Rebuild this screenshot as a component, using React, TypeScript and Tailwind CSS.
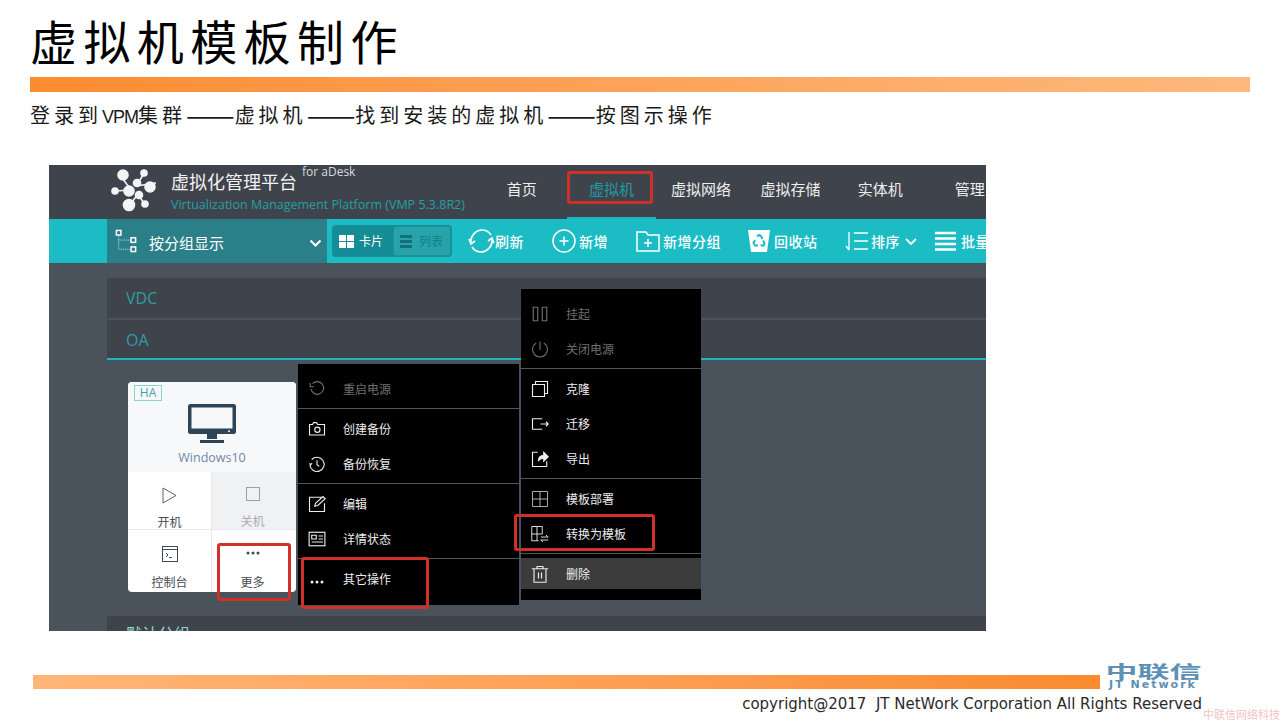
import React from "react";

const cjk = "font-['Noto_Sans_CJK_SC','Liberation_Sans',sans-serif]";

const Stroke: React.FC<{ size?: number; children: React.ReactNode; className?: string }> = ({
  size = 24,
  children,
  className,
}) => (
  <svg width={size} height={size} viewBox="0 0 24 24" fill="none" stroke="currentColor" strokeWidth="1.5" className={className}>
    {children}
  </svg>
);

const MenuItem: React.FC<{ icon: React.ReactNode; label: string; dim?: boolean; active?: boolean }> = ({
  icon,
  label,
  dim,
  active,
}) => (
  <div
    className={`flex items-center pl-[10px] ${active ? "h-[31px] mt-[4px] bg-[#3b3b3b]" : "h-[35px]"} ${
      dim ? "text-[#6f6f6f]" : "text-[#eeeeee]"
    }`}
  >
    <span className="w-[18px] h-[18px] flex items-center justify-center shrink-0">{icon}</span>
    <span className="ml-[17px] text-[12px]">{label}</span>
  </div>
);

const Sep = () => <div className="h-px my-[2px] bg-[#555555]" />;

const ToolItem: React.FC<{ icon: React.ReactNode; label: string; w: string; gap?: string; tail?: React.ReactNode }> = ({
  icon,
  label,
  w,
  gap = "ml-[3px]",
  tail,
}) => (
  <div className={`flex items-center text-white text-[14px] font-medium whitespace-nowrap shrink-0 ${w}`}>
    {icon}
    <span className={`${gap} tracking-[0.5px]`}>{label}</span>
    {tail}
  </div>
);

const Cell: React.FC<{ icon: React.ReactNode; label: string; dim?: boolean; className?: string; labelGap?: string }> = ({
  icon,
  label,
  dim,
  className,
  labelGap = "mt-[5px]",
}) => (
  <div className={`flex flex-col items-center ${className ?? ""}`}>
    <div className="h-[26px] shrink-0 flex items-center justify-center">{icon}</div>
    <span className={`${labelGap} shrink-0 text-[12px] leading-[20px] ${dim ? "text-[#a9adb3]" : "text-[#444a52]"}`}>{label}</span>
  </div>
);

const Logo = () => (
  <svg width="48" height="44" viewBox="0 0 48 44" fill="#f4f4f4" stroke="#f4f4f4" strokeWidth="1.6">
    <path d="M9 7 20 22 M34 4 25 18 M45 15 25 18 M4 23 20 22 M18 38 27 26 M34 37 27 26" />
    <circle cx="12" cy="7" r="5" />
    <circle cx="33" cy="5" r="3" />
    <circle cx="39" cy="19" r="5" />
    <circle cx="4" cy="23" r="3" />
    <circle cx="18" cy="23" r="5" />
    <circle cx="26" cy="15" r="3.5" />
    <circle cx="28" cy="27" r="3.5" />
    <circle cx="18" cy="37" r="5.5" />
    <circle cx="34" cy="36" r="3" />
  </svg>
);

const navItem = "w-[89.6px] flex justify-center pt-[13px]";
const dash = "text-[29px] leading-[0px] tracking-[0px] align-[-3px]";

export default function App() {
  return (
    <div className={`relative w-[1280px] h-[720px] overflow-hidden bg-white flex flex-col ${cjk}`}>
      <h1 className="ml-[30px] h-[77px] pt-[4px] text-[47px] leading-[72px] font-normal tracking-[6.4px] text-black whitespace-nowrap">
        虚拟机模板制作
      </h1>
      <div className="ml-[30px] w-[1220px] h-[15px] bg-gradient-to-r from-[#fb8c2e] to-[#fdb97c]" />
      <p className="ml-[30px] mt-[8px] h-[30px] text-[20px] leading-[30px] font-normal tracking-[4px] text-[#1a1a1a] whitespace-nowrap">
        登录到<span className="text-[18px] tracking-[-1px] font-['Liberation_Sans',sans-serif]">VPM</span>集群
        <span className={dash}>——</span>虚拟机<span className={dash}>——</span>找到安装的虚拟机<span className={dash}>——</span>按图示操作
      </p>

      <div className="relative ml-[49px] mt-[35px] w-[937px] h-[466px] overflow-hidden bg-[#4a535c]">
        {/* top nav */}
        <div className="h-[54px] bg-[#3f444c] flex pl-[62px]">
          <div className="mt-[3px]">
            <Logo />
          </div>
          <div className="ml-[12px] w-[306px] shrink-0 relative">
            <div className="flex items-start h-[30px]">
              <span className="text-[18px] leading-[26px] mt-[3px] text-[#f2f2f2] whitespace-nowrap">虚拟化管理平台</span>
              <span className="ml-[5px] text-[12px] leading-[14px] font-['Open_Sans',sans-serif] text-[#d8dadd] whitespace-nowrap">
                for aDesk
              </span>
            </div>
            <div className="text-[12.5px] leading-[16px] mt-[2px] font-['Open_Sans',sans-serif] text-[#22a0a6] whitespace-nowrap">
              Virtualization Management Platform (VMP 5.3.8R2)
            </div>
          </div>
          <nav className="flex h-[54px] text-[15px] text-[#eeeeee] whitespace-nowrap shrink-0">
            <a className={navItem}>首页</a>
            <a className={`${navItem} text-[#1f9aa2] border-b-2 border-[#1fb5bd]`}>虚拟机</a>
            <a className={navItem}>虚拟网络</a>
            <a className={navItem}>虚拟存储</a>
            <a className={navItem}>实体机</a>
            <a className={navItem}>管理</a>
          </nav>
        </div>

        {/* toolbar */}
        <div className="h-[44px] bg-[#1bbcc4] flex items-center pl-[58px]">
          <div className="w-[220px] h-[44px] bg-[#2a7f88] flex items-center pl-[8px] shrink-0 text-white">
            <svg width="22" height="26" viewBox="0 0 24 26" fill="none" stroke="#fff">
              <rect x="1.5" y="1.5" width="5" height="5" strokeWidth="1.6" />
              <rect x="17.5" y="9.5" width="5" height="5" strokeWidth="1.6" />
              <rect x="17.5" y="19.5" width="5" height="5" strokeWidth="1.6" />
              <path d="M4 7V22H17M4 12H17" strokeWidth="0.8" strokeDasharray="1 1" />
            </svg>
            <span className="ml-[12px] mt-[4px] text-[15px] whitespace-nowrap">按分组显示</span>
            <svg width="13" height="8" viewBox="0 0 12 8" fill="none" stroke="#fff" strokeWidth="2" className="ml-[85px] mt-[4px]">
              <path d="M1 1.5 6 6.5 11 1.5" />
            </svg>
          </div>
          <div className="ml-[5px] w-[120px] h-[32px] rounded-[4px] bg-[#158d96] flex shrink-0">
            <div className="w-[61px] flex items-center pl-[7px] text-white text-[12px]">
              <svg width="15" height="13" viewBox="0 0 15 13" fill="#fff">
                <path d="M0 0h7v6H0zM8 0h7v6H8zM0 7h7v6H0zM8 7h7v6H8z" />
              </svg>
              <span className="ml-[5px]">卡片</span>
            </div>
            <div className="w-[58px] my-px rounded-[3px] bg-[#27a3aa] border border-[#1e9099] flex items-center pl-[6px] text-[#158088] text-[12px]">
              <svg width="12" height="13" viewBox="0 0 12 13" fill="#126f77">
                <path d="M0 0h12v3H0zM0 5h12v3H0zM0 10h12v3H0z" />
              </svg>
              <span className="ml-[7px]">列表</span>
            </div>
          </div>
          <div className="ml-[16px] flex items-center">
            <ToolItem
              w="w-[84px]"
              gap="ml-0"
              label="刷新"
              icon={
                <svg width="27" height="26" viewBox="0 0 27 26" fill="none" stroke="#fff" strokeWidth="1.7">
                  <path d="M3 15C2 8 8 2 14 2c4 0 7 2 9 5M24 11c1 7-5 13-11 13-4 0-7-2-9-5" />
                  <path d="M1 11 3 16 7 13M26 15 24 10 20 13" />
                </svg>
              }
            />
            <ToolItem
              w="w-[84px]"
              label="新增"
              icon={
                <svg width="24" height="24" viewBox="0 0 24 24" fill="none" stroke="#fff" strokeWidth="1.5">
                  <circle cx="12" cy="12" r="11" />
                  <path d="M12 7.5v9M7.5 12h9" />
                </svg>
              }
            />
            <ToolItem
              w="w-[111px]"
              label="新增分组"
              icon={
                <svg width="24" height="21" viewBox="0 0 24 21" fill="none" stroke="#fff" strokeWidth="1.5">
                  <path d="M1 20V1h9l2 3h11v16z" />
                  <path d="M12 8v8M8 12h8" />
                </svg>
              }
            />
            <ToolItem
              w="w-[97px]"
              label="回收站"
              icon={
                <svg width="24" height="24" viewBox="0 0 24 24">
                  <path d="M1 1h22l-3 22H4z" fill="#fff" />
                  <path d="M10 7.500l2-1.500 2 1 1.500 3M8 11l-1.500 3 1.500 2.500h3M13.500 16.500h3l1-2.500-1.500-2.500" fill="none" stroke="#1bbcc4" strokeWidth="2" />
                </svg>
              }
            />
            <ToolItem
              w="w-[91px]"
              label="排序"
              icon={
                <svg width="24" height="20" viewBox="0 0 24 20" fill="none" stroke="#fff" strokeWidth="1.3">
                  <path d="M5 1v18M2 15l3 4M10 2h14M10 10h14M10 18h14" />
                </svg>
              }
              tail={
                <svg width="12" height="7" viewBox="0 0 12 7" fill="none" stroke="#fff" strokeWidth="1.8" className="ml-[5px]">
                  <path d="M1 1l5 5 5-5" />
                </svg>
              }
            />
            <ToolItem
              w="w-[60px]"
              gap="ml-[5px]"
              label="批量"
              icon={
                <svg width="21" height="20" viewBox="0 0 21 20" fill="none" stroke="#fff" strokeWidth="2.4">
                  <path d="M0 2h21M0 7.500h21M0 13h21M0 18.500h21" />
                </svg>
              }
            />
          </div>
        </div>

        {/* groups */}
        <div className="pl-[58px] pt-[15px]">
          <div className="h-[40px] bg-[#3f444c] pl-[19px] flex items-center text-[16px] text-[#2a9ea6] font-['Open_Sans',sans-serif]">
            VDC
          </div>
          <div className="mt-[2px] h-[40px] bg-[#3f444c] border-b-2 border-[#1fb5bd] pl-[19px] pt-[2px] flex items-center text-[16px] text-[#2a9ea6] font-['Open_Sans',sans-serif]">
            OA
          </div>

          <div className="ml-[21px] mt-[22px] w-[168px] h-[210px] rounded-[4px] overflow-hidden bg-white flex flex-col">
            <div className="relative h-[90px] bg-[#f7f8fa] flex flex-col items-center">
              <span className="absolute left-[6px] top-[3px] w-[28px] h-[16px] border border-[#8fd0d3] text-[#3aa5ab] text-[12px] leading-[14px] text-center font-['Open_Sans',sans-serif]">
                HA
              </span>
              <svg width="48" height="40" viewBox="0 0 48 40" className="mt-[22px]" fill="#2f4454">
                <rect x="0" y="0" width="48" height="30" rx="2.5" />
                <rect x="3.500" y="3.500" width="41" height="21" fill="#f7f8fa" />
                <circle cx="41" cy="27.200" r="1" fill="#f7f8fa" />
                <rect x="19" y="30" width="10" height="5" />
                <rect x="12" y="36" width="24" height="3" />
              </svg>
              <span className="mt-[5px] text-[12.5px] leading-[18px] text-[#7088a8] font-['Open_Sans',sans-serif]">Windows10</span>
            </div>
            <div className="grid grid-cols-2 flex-1 grid-rows-[58px_1fr]">
              <Cell
                label="开机"
                labelGap="mt-[4px]"
                className="pt-[10px] border-r border-b border-[#e8e9eb]"
                icon={
                  <svg width="15" height="17" viewBox="0 0 15 17" fill="none" stroke="#556476" strokeWidth="1">
                    <path d="M1 1l13 7.500L1 16z" />
                  </svg>
                }
              />
              <Cell
                label="关机"
                labelGap="mt-[4px]"
                dim
                className="pt-[9px] pr-[3px] bg-[#f0f1f3] border-b border-[#e8e9eb]"
                icon={
                  <svg width="14" height="14" viewBox="0 0 14 14" fill="none" stroke="#9aa0a8" strokeWidth="1">
                    <rect x="0.500" y="0.500" width="13" height="13" />
                  </svg>
                }
              />
              <Cell
                label="控制台"
                className="pt-[11px] border-r border-[#e8e9eb]"
                icon={
                  <svg width="16" height="16" viewBox="0 0 16 16" fill="none" stroke="#3d4a58" strokeWidth="1">
                    <rect x="0.500" y="0.500" width="15" height="15" />
                    <path d="M1 3.500h14M4 7l2 2-2 2M7 11.500h3" />
                  </svg>
                }
              />
              <Cell
                label="更多"
                labelGap="mt-[6px]"
                className="pt-[10px] pr-[3px]"
                icon={
                  <svg width="14" height="4" viewBox="0 0 14 4" fill="#3d4a58">
                    <circle cx="2" cy="2" r="1.500" />
                    <circle cx="7" cy="2" r="1.500" />
                    <circle cx="12" cy="2" r="1.500" />
                  </svg>
                }
              />
            </div>
          </div>

          <div className="mt-[24px] h-[40px] bg-[#3f444c] pl-[19px] pt-[6px] text-[16px] leading-[22px] text-[#8fd6da]">
            默认分组
          </div>
        </div>

        {/* context menu */}
        <div className="absolute left-[249px] top-[199px] w-[221px] h-[241px] bg-black pt-[7px]">
          <MenuItem
            dim
            label="重启电源"
            icon={
              <Stroke size={18}>
                <path d="M6 5a8.500 8.500 0 1 1-2 7M3 4v5h5" />
              </Stroke>
            }
          />
          <Sep />
          <MenuItem
            label="创建备份"
            icon={
              <Stroke size={18}>
                <path d="M2 6h4l1.500-2.500h4L13 6h9v14H2z" />
                <circle cx="12.500" cy="13" r="3.500" />
              </Stroke>
            }
          />
          <MenuItem
            label="备份恢复"
            icon={
              <Stroke size={18}>
                <path d="M5 6a9.500 9.500 0 1 1-2.500 7M2 11l1.500 2 2-2M12 7v6l3 2" />
              </Stroke>
            }
          />
          <Sep />
          <MenuItem
            label="编辑"
            icon={
              <Stroke size={18}>
                <path d="M21 3H2v19h20V11M9 15l1-4L20 2l3 3-10 9z" />
              </Stroke>
            }
          />
          <MenuItem
            label="详情状态"
            icon={
              <Stroke size={18}>
                <rect x="1.500" y="3" width="21" height="18" />
                <path d="M5 7h6v5H5zM14 8h6M14 12h6M5 16h15" />
              </Stroke>
            }
          />
          <Sep />
          <MenuItem
            label="其它操作"
            icon={
              <svg width="14" height="4" viewBox="0 0 14 4" fill="#eee" className="mt-[6px]">
                <circle cx="2" cy="2" r="1.500" />
                <circle cx="7" cy="2" r="1.500" />
                <circle cx="12" cy="2" r="1.500" />
              </svg>
            }
          />
        </div>

        {/* submenu */}
        <div className="absolute left-[472px] top-[124px] w-[180px] h-[311px] bg-black pt-[7px]">
          <MenuItem
            dim
            label="挂起"
            icon={
              <Stroke size={18}>
                <path d="M3 3h6v18H3zM15 3h6v18h-6z" />
              </Stroke>
            }
          />
          <MenuItem
            dim
            label="关闭电源"
            icon={
              <Stroke size={18}>
                <path d="M12 2v11M7 4a10 10 0 1 0 10 0" />
              </Stroke>
            }
          />
          <Sep />
          <MenuItem
            label="克隆"
            icon={
              <Stroke size={18}>
                <path d="M6 6V2h16v16h-4M2 6h16v16H2z" />
              </Stroke>
            }
          />
          <MenuItem
            label="迁移"
            icon={
              <Stroke size={18}>
                <path d="M15 5H2v14h13M13 12h10M20 9l3 3-3 3" />
              </Stroke>
            }
          />
          <MenuItem
            label="导出"
            icon={
              <Stroke size={18}>
                <path d="M9 3H2v19h19v-7" />
                <path d="M10 14c0-4 3-7 7-7V3l6 6-6 6v-4c-3 0-5 1-7 3z" fill="currentColor" />
              </Stroke>
            }
          />
          <Sep />
          <MenuItem
            label="模板部署"
            icon={
              <Stroke size={18} className="text-[#cfcfcf]">
                <path d="M2 2h20v20H2zM12 2v20M2 12h20" strokeWidth="1.1" />
              </Stroke>
            }
          />
          <MenuItem
            label="转换为模板"
            icon={
              <Stroke size={18}>
                <path d="M15 12V2H1v19h9M8 2v19M1 12h14M13 16h10l-3-2.500M23 20H13l3 2.500" strokeWidth="1.2" />
              </Stroke>
            }
          />
          <Sep />
          <MenuItem
            active
            label="删除"
            icon={
              <Stroke size={18}>
                <path d="M1 5h22M8 5V2h8v3M4 5v18h16V5M10 10v8M14 10v8" />
              </Stroke>
            }
          />
        </div>

        {/* red highlight boxes */}
        <div className="absolute left-[518px] top-[6px] w-[86px] h-[33px] border-[3px] border-[#d0302a] rounded-[3px]" />
        <div className="absolute left-[168px] top-[378px] w-[74px] h-[58px] border-[3px] border-[#d0302a] rounded-[3px]" />
        <div className="absolute left-[252px] top-[392px] w-[128px] h-[52px] border-[3px] border-[#d0302a] rounded-[3px]" />
        <div className="absolute left-[465px] top-[349px] w-[141px] h-[37px] border-[3px] border-[#d0302a] rounded-[3px]" />
      </div>

      {/* footer */}
      <div className="mt-[31px] h-[27px] flex">
        <div className="ml-[33px] w-[1067px] h-[14px] self-end bg-gradient-to-r from-[#ffb677] to-[#fb8b2e]" />
        <div className="ml-[5px] w-[96px] flex flex-col items-center text-[#5c90b5] font-bold">
          <span className="h-[18px] text-[17px] leading-[18px] whitespace-nowrap scale-x-[1.88]">中联信</span>
          <span className="h-[9px] text-[11px] leading-[9px] tracking-[2px] font-['DejaVu_Sans',sans-serif] whitespace-nowrap">JT Network</span>
        </div>
      </div>
      <div className="mt-[5px] w-[1202px] text-right text-[15px] leading-[20px] text-[#2a2a2a] font-['DejaVu_Sans',sans-serif] whitespace-nowrap">
        copyright@2017&nbsp; JT NetWork Corporation All Rights Reserved
      </div>
      <span className="absolute right-0 bottom-0 text-[11px] leading-[12px] text-[#f0c4c4] whitespace-nowrap">中联信网络科技</span>
    </div>
  );
}
